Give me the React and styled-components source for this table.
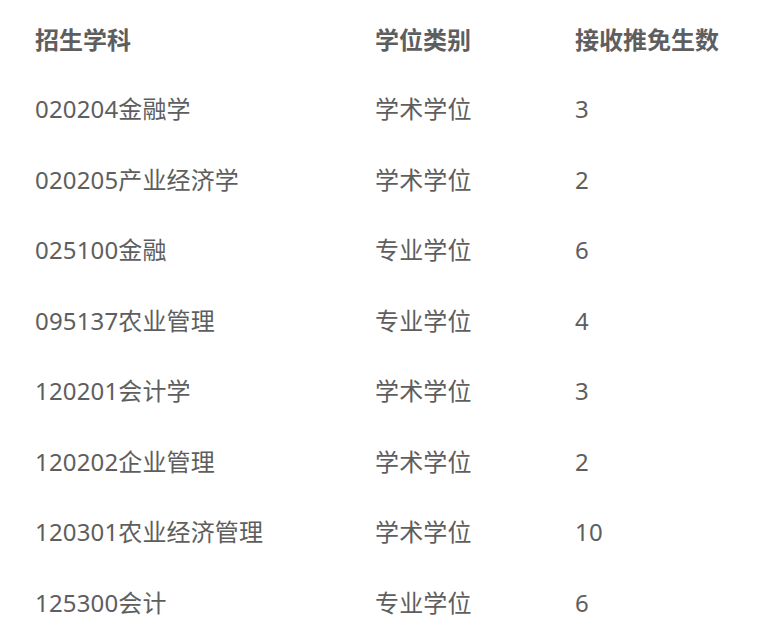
import React from 'react'
import styled, { createGlobalStyle } from 'styled-components'

const GlobalStyle = createGlobalStyle`
  body {
    margin: 0;
    background: #ffffff;
    font-family: "Noto Sans", "Noto Sans CJK SC", sans-serif;
  }
`

const rows = [
  ['020204金融学', '学术学位', '3'],
  ['020205产业经济学', '学术学位', '2'],
  ['025100金融', '专业学位', '6'],
  ['095137农业管理', '专业学位', '4'],
  ['120201会计学', '学术学位', '3'],
  ['120202企业管理', '学术学位', '2'],
  ['120301农业经济管理', '学术学位', '10'],
  ['125300会计', '专业学位', '6'],
]

const Table = styled.div`
  padding: 6px 0 0 35px;
  display: flex;
  flex-direction: column;
`

const Row = styled.div`
  display: grid;
  grid-template-columns: 340px 200px 1fr;
  align-items: center;
  height: ${(p) => (p.head ? '68px' : '70.5px')};
`

const Cell = styled.div`
  font-size: 24px;
  line-height: 1;
  color: #5e5e5e;
  font-weight: ${(p) => (p.head ? 700 : 400)};
  letter-spacing: ${(p) => (p.head ? '0' : '0.15px')};
  white-space: nowrap;
`

const App = () => (
  <>
    <GlobalStyle />
    <Table>
      <Row head>
        <Cell head>招生学科</Cell>
        <Cell head>学位类别</Cell>
        <Cell head>接收推免生数</Cell>
      </Row>
      {rows.map((r) => (
        <Row key={r[0]}>
          {r.map((c, i) => (
            <Cell key={i}>{c}</Cell>
          ))}
        </Row>
      ))}
    </Table>
  </>
)

export default App
